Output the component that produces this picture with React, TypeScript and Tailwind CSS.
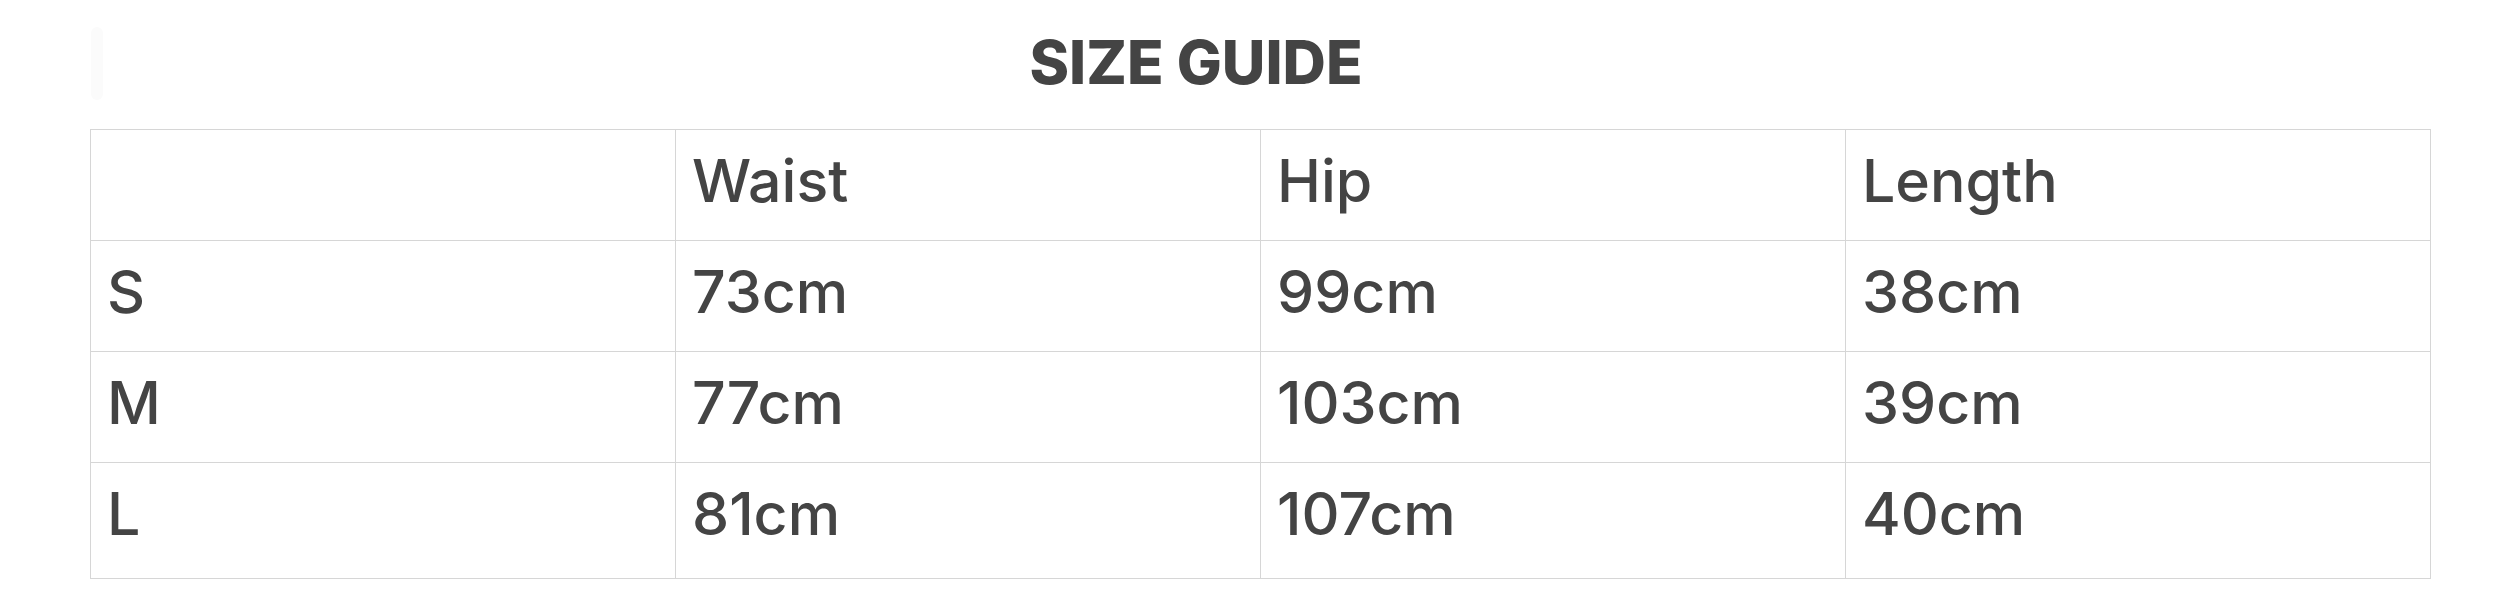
import React from "react";

const rows = [
  { size: "S", waist: "73cm", hip: "99cm", length: "38cm" },
  { size: "M", waist: "77cm", hip: "103cm", length: "39cm" },
  { size: "L", waist: "81cm", hip: "107cm", length: "40cm" },
];

export default function App() {
  const cell =
    "w-[585px] border border-[#d6d6d6] px-[16px] pt-[21px] align-top text-left text-[59px] leading-none font-medium";

  return (
    <div className="min-h-[600px] w-[2505px] bg-white text-[#444444] font-['Inter','Liberation_Sans',sans-serif]">
      <div className="relative ml-[91px] w-[2210px] pt-[32px] text-center">
        <div className="absolute left-0 top-[27px] h-[73px] w-[12px] rounded-full bg-[#fbfbfb]" />
        <h2 className="text-[60px] leading-none font-extrabold">SIZE GUIDE</h2>
      </div>

      <table className="ml-[90px] mt-[37px] border-collapse">
        <thead>
          <tr className="h-[111px]">
            <th className={cell}></th>
            <th className={cell}>Waist</th>
            <th className={cell}>Hip</th>
            <th className={cell}>Length</th>
          </tr>
        </thead>
        <tbody>
          {rows.map((r, i) => (
            <tr key={r.size} className={i === rows.length - 1 ? "h-[116px]" : "h-[111px]"}>
              <td className={cell}>{r.size}</td>
              <td className={cell}>{r.waist}</td>
              <td className={cell}>{r.hip}</td>
              <td className={cell}>{r.length}</td>
            </tr>
          ))}
        </tbody>
      </table>
    </div>
  );
}
